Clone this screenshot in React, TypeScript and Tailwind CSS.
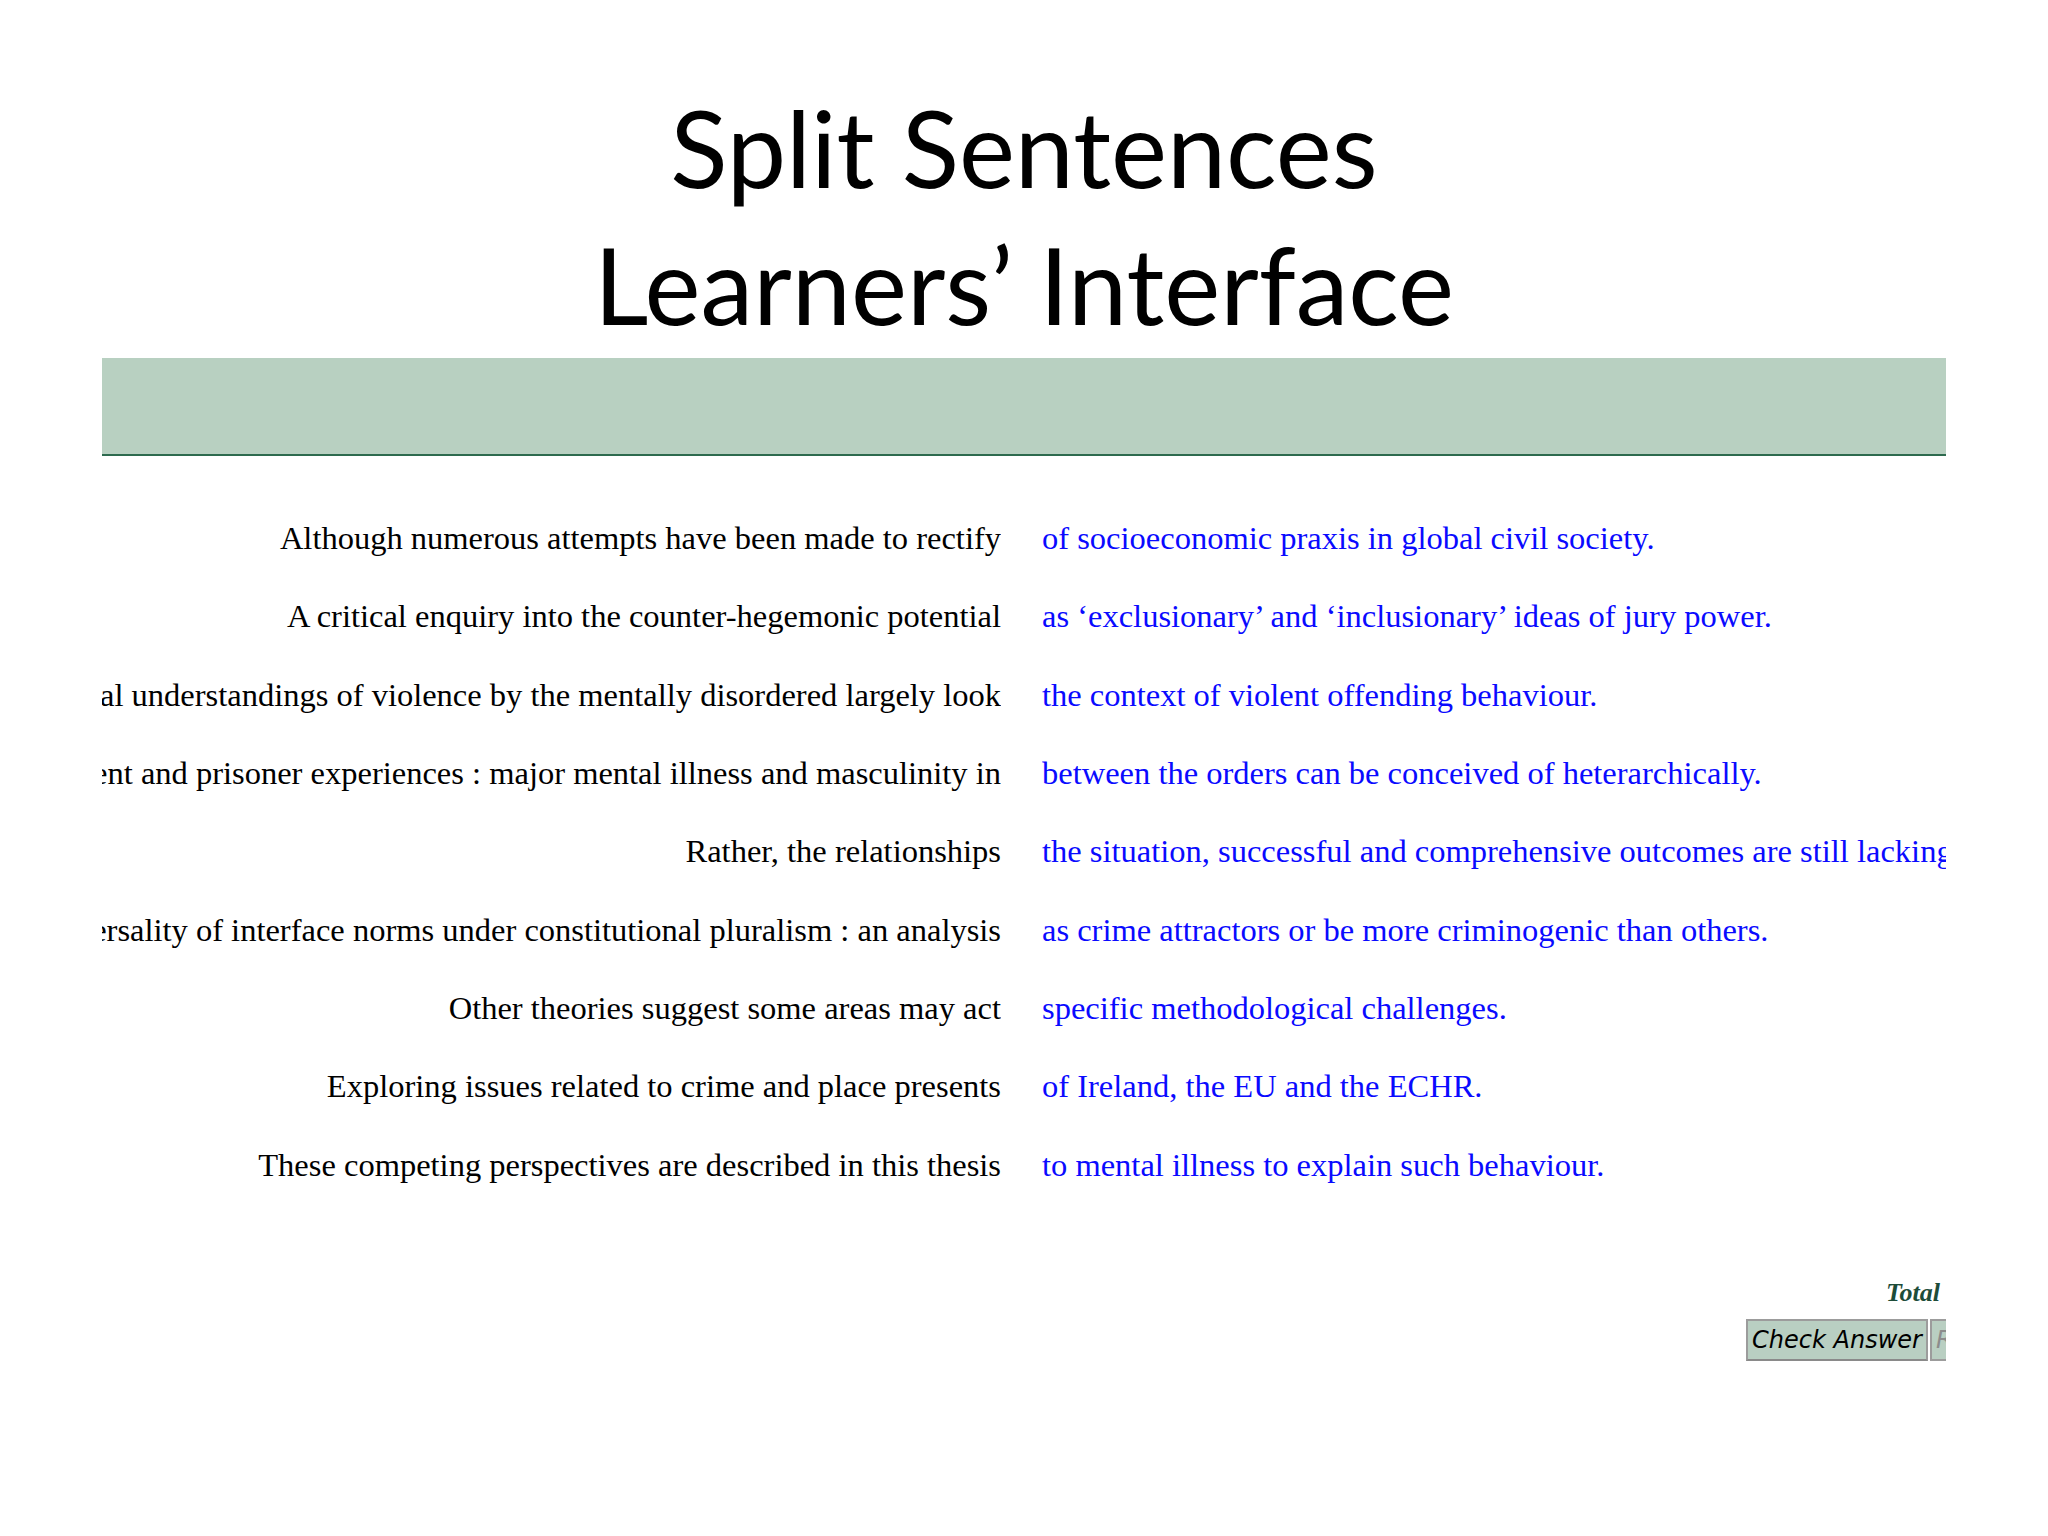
import React from "react";

const rows: [string, string][] = [
  ["Although numerous attempts have been made to rectify", "of socioeconomic praxis in global civil society."],
  ["A critical enquiry into the counter-hegemonic potential", "as \u2018exclusionary\u2019 and \u2018inclusionary\u2019 ideas of jury power."],
  ["Traditional understandings of violence by the mentally disordered largely look", "the context of violent offending behaviour."],
  ["Treatment and prisoner experiences : major mental illness and masculinity in", "between the orders can be conceived of heterarchically."],
  ["Rather, the relationships", "the situation, successful and comprehensive outcomes are still lacking."],
  ["The universality of interface norms under constitutional pluralism : an analysis", "as crime attractors or be more criminogenic than others."],
  ["Other theories suggest some areas may act", "specific methodological challenges."],
  ["Exploring issues related to crime and place presents", "of Ireland, the EU and the ECHR."],
  ["These competing perspectives are described in this thesis", "to mental illness to explain such behaviour."],
];

export default function App() {
  return (
    <div className="w-[2048px] h-[1536px] bg-white flex flex-col overflow-hidden">
      <div
        className="pt-[79px] text-center text-black text-[106px] leading-[137px]"
        style={{ fontFamily: "Lato, 'Open Sans', sans-serif" }}
      >
        <div>Split Sentences</div>
        <div>Learners’ Interface</div>
      </div>
      <div className="mt-[5px] ml-[102px] w-[1844px] h-[98px] bg-[#b8d0c1] border-b-2 border-[#2d6a4e]" />
      <div
        className="mt-[43px] ml-[102px] w-[1844px] flex flex-col text-[32.5px] leading-[78.33px]"
        style={{ fontFamily: "'Liberation Serif', 'Times New Roman', serif" }}
      >
        {rows.map(([l, r], i) => (
          <div key={i} className="flex h-[78.33px]">
            <div className="w-[899px] flex justify-end overflow-hidden whitespace-nowrap text-black">
              <span className="shrink-0">{l}</span>
            </div>
            <div className="ml-[41px] flex-1 overflow-hidden whitespace-nowrap text-[#0a0aff]">
              <span>{r}</span>
            </div>
          </div>
        ))}
      </div>
      <div className="mt-[74px] ml-[102px] w-[1844px] flex flex-col items-end">
        <div
          className="pr-[6px] text-[26px] leading-[30px] font-bold italic text-[#1d4c39]"
          style={{ fontFamily: "'Liberation Serif', 'Times New Roman', serif" }}
        >
          Total
        </div>
        <div
          className="mt-[11px] flex overflow-hidden w-[200px] justify-start"
          style={{ fontFamily: "'DejaVu Sans', Verdana, sans-serif" }}
        >
          <div className="shrink-0 w-[182px] h-[42px] bg-[#b9cfc2] border-2 border-[#9c9c9c] border-b-[#8a8a8a] flex items-center justify-center italic text-[24px] text-black">
            Check Answer
          </div>
          <div className="shrink-0 ml-[2px] w-[120px] h-[42px] bg-[#b9cfc2] border-2 border-[#9c9c9c] flex items-center pl-[4px] italic text-[24px] text-[#8c8c8c]">
            Reset
          </div>
        </div>
      </div>
    </div>
  );
}
